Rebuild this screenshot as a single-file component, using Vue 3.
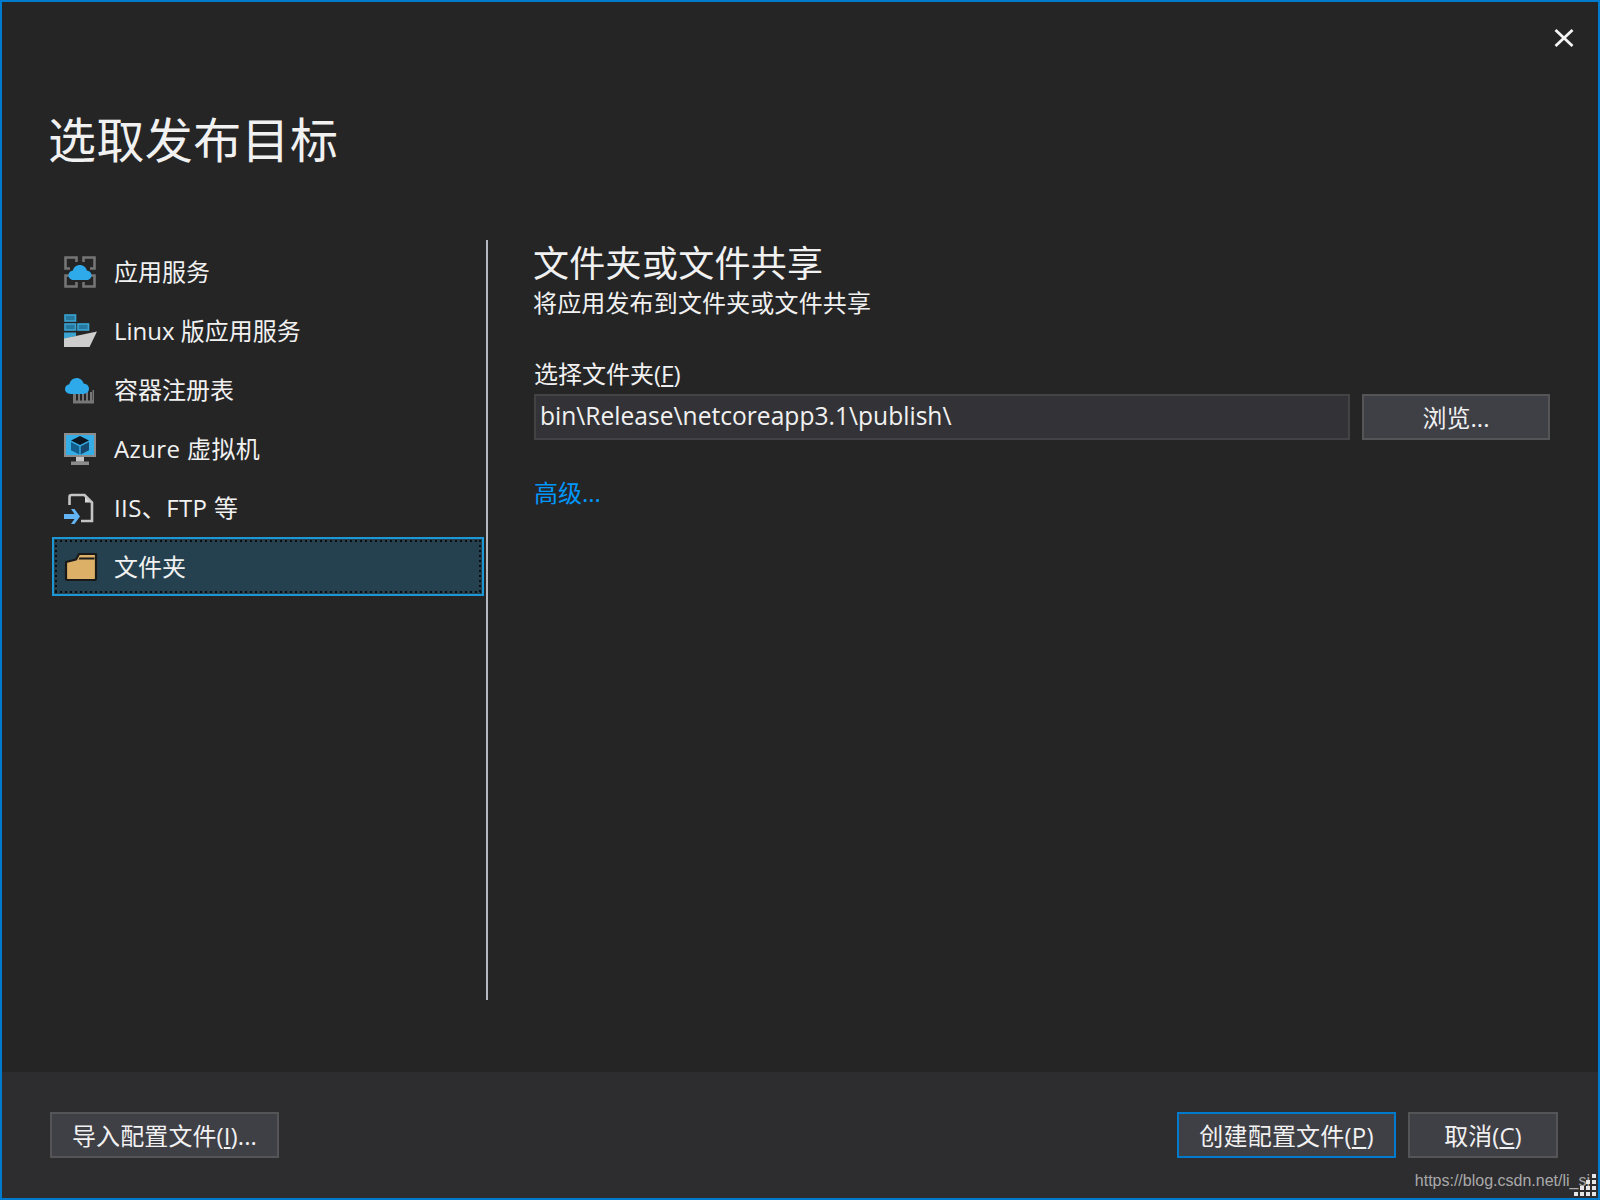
<script setup>
const targets = [
  { id: 'app', label: '应用服务' },
  { id: 'linux', label: 'Linux 版应用服务' },
  { id: 'registry', label: '容器注册表' },
  { id: 'vm', label: 'Azure 虚拟机', wide: true },
  { id: 'iis', label: 'IIS、FTP 等', wide: true },
  { id: 'folder', label: '文件夹', selected: true },
]
const gripDots = [
  [18, 0], [12, 6], [18, 6], [6, 12], [12, 12], [18, 12], [0, 18], [6, 18], [12, 18], [18, 18],
]
const rackBars = [10, 14, 18, 22, 26]
</script>

<template>
  <div class="window">
    <main class="main">
      <button class="close" aria-label="关闭">
        <svg width="20" height="18" viewBox="0 0 20 18"><path d="M1.500 1 18.500 17M18.500 1 1.500 17" stroke="#f4f4f4" stroke-width="2.800" fill="none" /></svg>
      </button>
      <h1 class="title">选取发布目标</h1>
      <div class="body">
        <ul class="list">
          <li v-for="t in targets" :key="t.id" class="item" :class="{ selected: t.selected, wide: t.wide }">
            <span class="icon">
              <svg v-if="t.id === 'app'" width="32" height="32" viewBox="0 0 32 32">
                <path d="M12.500 6V1.500H1.500V12.500H6M19.500 6V1.500H30.500V12.500H26M12.500 26V30.500H1.500V19.500H6M19.500 26V30.500H30.500V19.500H26" fill="none" stroke="#757575" stroke-width="2.600" />
                <path d="M10 24c-3.200 0-5.500-2.100-5.500-4.800 0-2.500 1.900-4.400 4.400-4.700C9.700 11.200 12.500 9 15.800 9c3.600 0 6.400 2.400 7 5.500 2.700.3 4.700 2.200 4.700 4.700 0 2.700-2.200 4.800-5 4.800z" fill="#2ea9ea" />
              </svg>
              <svg v-else-if="t.id === 'linux'" width="33" height="33" viewBox="0 0 33 33">
                <rect x="1" y="1" width="10.500" height="6" fill="#27789e" stroke="#3aa3d2" stroke-width="1.600" />
                <rect x="1" y="10" width="10.500" height="6" fill="#27789e" stroke="#3aa3d2" stroke-width="1.600" />
                <rect x="14" y="10" width="10.500" height="6" fill="#27789e" stroke="#3aa3d2" stroke-width="1.600" />
                <path d="M0 18.500h12V22L0 25z" fill="#3aa3d2" />
                <path d="M0 24.500 33 17.500 25.500 33H0z" fill="#cdcdcd" />
              </svg>
              <svg v-else-if="t.id === 'registry'" width="32" height="32" viewBox="0 0 32 32">
                <path d="M9 26.500h21V29.500H9z" fill="#777" />
                <rect v-for="x in rackBars" :key="x" :x="x" y="18" width="2" height="9" fill="#777" />
                <path d="M9 19h1.500v8H9zM28.500 16H30v11h-1.500z" fill="#777" />
                <path d="M6.500 20C3.400 20 1 17.900 1 15.100c0-2.600 1.900-4.600 4.400-4.900C6.100 6.800 9 4 12.600 4c3.500 0 6.200 2.400 7 5.600 3 .2 5.400 2.300 5.400 5.200 0 3-2.400 5.200-5.500 5.200z" fill="#2ea9ea" />
              </svg>
              <svg v-else-if="t.id === 'vm'" width="32" height="32" viewBox="0 0 32 32">
                <rect x="0" y="0" width="32" height="24" fill="#8c8c8c" />
                <rect x="2" y="2" width="28" height="20" fill="#35aee8" />
                <path d="M7 28.500h18V32H7z" fill="#8c8c8c" /><path d="M12 24h8v4.500h-8z" fill="#c4c4c4" />
                <path d="M16 3 25 7.500 16 12 7 7.500z" fill="#0b1822" />
                <path d="M7 9l8.300 4.300V21.500L7 17.200z" fill="#125f8e" />
                <path d="M25 9l-8.300 4.300V21.500l8.300-4.300z" fill="#16496d" />
              </svg>
              <svg v-else-if="t.id === 'iis'" width="32" height="32" viewBox="0 0 32 32">
                <path d="M21 2.500V10.500H28z" fill="#d9d9d9" />
                <path d="M5.500 13V5Q5.500 3 7.500 3H20.500L28 10.500V29H17" fill="none" stroke="#c4c4c4" stroke-width="2.600" />
                <path d="M7 17h3.500L16 24.500 10.500 32H7l3.500-5H0v-5h10.500z" fill="#62b3f4" />
              </svg>
              <svg v-else width="34" height="30" viewBox="0 0 34 30">
                <path d="M2 10 12 7.500 15 2H32V26.500Q32 28 30.500 28H3.500Q2 28 2 26.500Z" fill="#dcb067" stroke="#191919" stroke-width="2.200" stroke-linejoin="round" />
                <path d="M15.500 5.500H30.500V7.500H14.500z" fill="#1d1d1d" />
              </svg>
            </span>
            <span class="label">{{ t.label }}</span>
          </li>
        </ul>
        <div class="divider"></div>
        <section class="detail">
          <h2 class="heading">文件夹或文件共享</h2>
          <p class="sub">将应用发布到文件夹或文件共享</p>
          <label class="field-label">选择文件夹(<u>F</u>)</label>
          <div class="field-row">
            <div class="input">bin\Release\netcoreapp3.1\publish\</div>
            <button class="btn browse">浏览...</button>
          </div>
          <a class="link">高级...</a>
        </section>
      </div>
    </main>
    <footer class="footer">
      <button class="btn import">导入配置文件(<u>I</u>)...</button>
      <div class="actions">
        <button class="btn primary">创建配置文件(<u>P</u>)</button>
        <button class="btn cancel">取消(<u>C</u>)</button>
      </div>
    </footer>
    <span class="watermark">https://blog.csdn.net/li_si</span>
    <svg class="grip" width="22" height="22" viewBox="0 0 22 22">
      <rect v-for="(d, i) in gripDots" :key="i" :x="d[0]" :y="d[1]" width="4" height="4" fill="#e6e6e6" />
    </svg>
  </div>
</template>

<style>
html, body { margin: 0; background: #252526; }
</style>

<style scoped>
.window {
  position: relative;
  box-sizing: border-box;
  width: 1600px;
  height: 1200px;
  display: flex;
  flex-direction: column;
  border: 2px solid #007acc;
  background: #252526;
  color: #f1f1f1;
  font-family: "Open Sans", "Noto Sans CJK SC", sans-serif;
  overflow: hidden;
}
.main { position: relative; flex: 1; min-height: 0; padding: 0 48px; }
.close {
  position: absolute;
  top: 27px;
  right: 24px;
  padding: 0;
  border: 0;
  background: none;
  display: flex;
}
.title {
  margin: 0 0 65px -2px;
  padding-top: 103px;
  font-size: 48px;
  line-height: 70px;
  font-weight: 400;
  letter-spacing: 0.4px;
}
.body { display: flex; height: 760px; }
.list {
  list-style: none;
  margin: 0 0 0 2px;
  padding: 2px 0 0;
  width: 432px;
}
.item {
  position: relative;
  box-sizing: border-box;
  height: 59px;
  display: flex;
  align-items: center;
  padding-left: 12px;
  font-size: 24px;
  border: 2px solid transparent;
}
.item.wide { letter-spacing: 0.4px; }
.item.selected { background: #25414f; border-color: #1c97d4; }
.item.selected::after {
  content: "";
  position: absolute;
  inset: 1px;
  pointer-events: none;
  background-image:
    linear-gradient(90deg, #0c0c0c 2px, transparent 2px),
    linear-gradient(90deg, #0c0c0c 2px, transparent 2px),
    linear-gradient(#0c0c0c 2px, transparent 2px),
    linear-gradient(#0c0c0c 2px, transparent 2px);
  background-size: 5px 2px, 5px 2px, 2px 5px, 2px 5px;
  background-position: 0 0, 0 100%, 0 0, 100% 0;
  background-repeat: repeat-x, repeat-x, repeat-y, repeat-y;
}
.icon { width: 34px; height: 34px; display: flex; align-items: center; justify-content: flex-start; flex: none; margin-left: -2px; margin-right: 16px; }
.label { line-height: 34px; padding-top: 1px; white-space: nowrap; }
.divider { width: 2px; margin-left: 2px; background: #b4b7bd; flex: none; }
.detail { flex: 1; padding-left: 46px; padding-right: 0; }
.heading { margin: 1px 0 0 -1px; font-size: 36px; line-height: 46px; font-weight: 400; letter-spacing: 0.3px; }
.sub { margin: 0 0 0 -1px; font-size: 24px; line-height: 32px; letter-spacing: 0.15px; }
.field-label { display: block; margin-top: 38px; font-size: 24px; line-height: 34px; }
.field-row { display: flex; gap: 12px; margin-top: 3px; width: 1016px; }
.input {
  box-sizing: border-box;
  flex: none;
  width: 816px;
  height: 46px;
  padding-left: 4px;
  background: #333337;
  border: 2px solid #434346;
  font-size: 24.600px;
  line-height: 39px;
  white-space: nowrap;
}
.btn {
  box-sizing: border-box;
  height: 46px;
  padding: 2px 0 0;
  background: #3f3f46;
  border: 2px solid #555558;
  color: #f1f1f1;
  font-family: inherit;
  font-size: 24px;
  line-height: 38px;
}
.browse { width: 188px; }
.link { display: block; margin-top: 36px; font-size: 24px; line-height: 34px; color: #0097fb; }
.footer {
  flex: none;
  height: 126px;
  box-sizing: border-box;
  padding: 40px 40px 0 48px;
  display: flex;
  justify-content: space-between;
  align-items: flex-start;
  background: #2d2d30;
}
.actions { display: flex; gap: 12px; }
.import { width: 229px; letter-spacing: 0.1px; }
.primary { width: 219px; border-color: #007acc; letter-spacing: 0.2px; }
.cancel { width: 150px; }
.watermark {
  position: absolute;
  right: 8px;
  bottom: 4px;
  font-family: "Liberation Sans", sans-serif;
  font-size: 16px;
  line-height: 26px;
  color: #a9a9a9;
}
.grip { position: absolute; right: 2px; bottom: 2px; }
</style>
